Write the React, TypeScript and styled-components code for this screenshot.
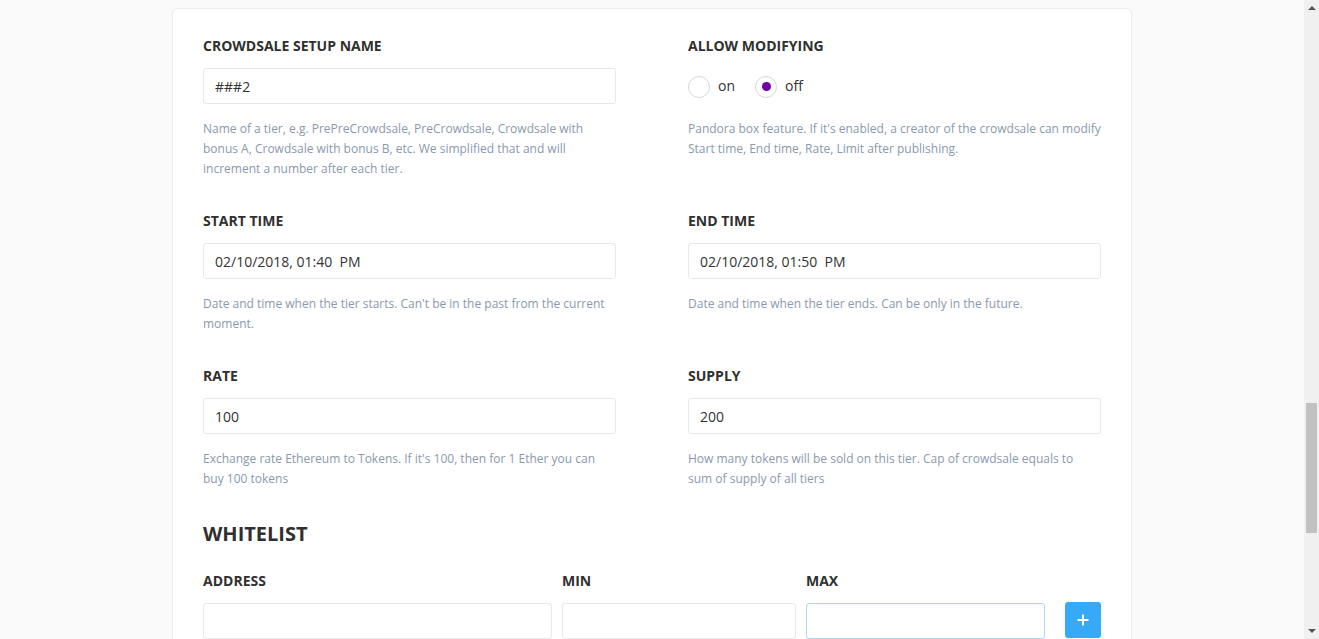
import React from 'react';
import styled, { createGlobalStyle } from 'styled-components';

const GlobalStyle = createGlobalStyle`
  html, body {
    margin: 0;
    padding: 0;
    background: #fafafa;
    font-family: 'Open Sans', 'Liberation Sans', sans-serif;
    overflow: hidden;
  }
`;

const Page = styled.div`
  display: flex;
  height: 639px;
  overflow: hidden;
`;

const Main = styled.div`
  flex: 1;
  display: flex;
  justify-content: center;
  padding-top: 8px;
`;

const Card = styled.div`
  width: 960px;
  box-sizing: border-box;
  background: #fff;
  border: 1px solid #ebebeb;
  border-radius: 6px;
  padding: 27px 30px 40px;
  align-self: flex-start;
`;

const FieldsGrid = styled.div`
  display: grid;
  grid-template-columns: 413px 413px;
  justify-content: space-between;
  row-gap: 32px;
`;

const Field = styled.div`
  display: flex;
  flex-direction: column;
`;

const Label = styled.div`
  font-size: 14px;
  line-height: 20px;
  font-weight: 700;
  color: #303030;
  text-transform: uppercase;
  margin-bottom: 12px;
`;

const Input = styled.input<{ $focused?: boolean }>`
  box-sizing: border-box;
  width: 100%;
  height: 36px;
  padding: 0 11px;
  border: 1px solid ${p => (p.$focused ? '#acd8ee' : '#e8e8e8')};
  border-radius: 3px;
  background: #fff;
  font-family: 'Open Sans', 'Liberation Sans', sans-serif;
  font-size: 14px;
  color: #333;
  outline: none;
`;

const Description = styled.p<{ $wide?: boolean }>`
  margin: 15px ${p => (p.$wide ? '-8px' : '4px')} 0 0;
  font-size: 12px;
  line-height: 20px;
  color: #8a99ad;
`;

const RadioRow = styled.div`
  display: flex;
  align-items: center;
  height: 36px;
  gap: 20px;
`;

const RadioOption = styled.label`
  display: flex;
  align-items: center;
  gap: 8px;
  font-size: 14px;
  line-height: 20px;
  color: #333;
  margin-top: -1px;
`;

const RadioCircle = styled.span<{ $checked?: boolean }>`
  box-sizing: border-box;
  width: 22px;
  height: 22px;
  border-radius: 50%;
  border: 1px solid #d3d9e0;
  background: #fff;
  display: flex;
  align-items: center;
  justify-content: center;
  margin-top: 2px;

  &::after {
    content: '';
    width: 9px;
    height: 9px;
    border-radius: 50%;
    background: ${p => (p.$checked ? '#70009f' : 'transparent')};
  }
`;

const SectionTitle = styled.h2`
  margin: 31px 0 23px;
  font-size: 20px;
  line-height: 28px;
  font-weight: 700;
  color: #303030;
  text-transform: uppercase;
`;

const WhitelistGrid = styled.div`
  display: grid;
  grid-template-columns: 349px 234px 239px 1fr;
  column-gap: 10px;
  align-items: end;
`;

const AddButton = styled.button`
  justify-self: end;
  width: 36px;
  height: 36px;
  border: none;
  border-radius: 3px;
  background: #36a9f7;
  display: flex;
  align-items: center;
  justify-content: center;
  padding: 0;
  margin-bottom: 1px;
`;

const ScrollTrack = styled.div`
  width: 15px;
  background: #f0f0f0;
  display: flex;
  flex-direction: column;
  align-items: center;
`;

const ScrollArrow = styled.div<{ $down?: boolean }>`
  margin-top: ${p => (p.$down ? 'auto' : '6px')};
  margin-bottom: ${p => (p.$down ? '6px' : '0')};
  width: 0;
  height: 0;
  border-left: 4px solid transparent;
  border-right: 4px solid transparent;
  ${p => (p.$down ? 'border-top: 4px solid #555;' : 'border-bottom: 4px solid #555;')}
`;

const ScrollThumb = styled.div`
  width: 11px;
  height: 130px;
  margin-top: 393px;
  background: #c1c1c1;
`;

const fields = [
  {
    label: 'Crowdsale setup name',
    value: '###2',
    desc: 'Name of a tier, e.g. PrePreCrowdsale, PreCrowdsale, Crowdsale with bonus A, Crowdsale with bonus B, etc. We simplified that and will increment a number after each tier.',
  },
  {
    label: 'Allow modifying',
    radio: true,
    desc: "Pandora box feature. If it's enabled, a creator of the crowdsale can modify Start time, End time, Rate, Limit after publishing.",
  },
  {
    label: 'Start time',
    value: '02/10/2018, 01:40\u00a0\u00a0PM',
    desc: "Date and time when the tier starts. Can't be in the past from the current moment.",
  },
  {
    label: 'End time',
    value: '02/10/2018, 01:50\u00a0\u00a0PM',
    desc: 'Date and time when the tier ends. Can be only in the future.',
  },
  {
    label: 'Rate',
    value: '100',
    desc: "Exchange rate Ethereum to Tokens. If it's 100, then for 1 Ether you can buy 100 tokens",
  },
  {
    label: 'Supply',
    value: '200',
    desc: 'How many tokens will be sold on this tier. Cap of crowdsale equals to sum of supply of all tiers',
  },
];

const App: React.FC = () => {
  return (
    <Page>
      <GlobalStyle />
      <Main>
        <Card>
          <FieldsGrid>
            {fields.map(f => (
              <Field key={f.label}>
                <Label>{f.label}</Label>
                {f.radio ? (
                  <RadioRow>
                    <RadioOption>
                      <RadioCircle />
                      on
                    </RadioOption>
                    <RadioOption>
                      <RadioCircle $checked />
                      off
                    </RadioOption>
                  </RadioRow>
                ) : (
                  <Input type="text" defaultValue={f.value} />
                )}
                <Description $wide={f.radio}>{f.desc}</Description>
              </Field>
            ))}
          </FieldsGrid>

          <SectionTitle>Whitelist</SectionTitle>
          <WhitelistGrid>
            <Field>
              <Label>Address</Label>
              <Input type="text" />
            </Field>
            <Field>
              <Label>Min</Label>
              <Input type="text" />
            </Field>
            <Field>
              <Label>Max</Label>
              <Input type="text" $focused />
            </Field>
            <AddButton>
              <svg width="12" height="12" viewBox="0 0 12 12">
                <path d="M6 0.5v11M0.5 6h11" stroke="#fff" strokeWidth="2" />
              </svg>
            </AddButton>
          </WhitelistGrid>
        </Card>
      </Main>
      <ScrollTrack>
        <ScrollArrow />
        <ScrollThumb />
        <ScrollArrow $down />
      </ScrollTrack>
    </Page>
  );
};

export default App;
